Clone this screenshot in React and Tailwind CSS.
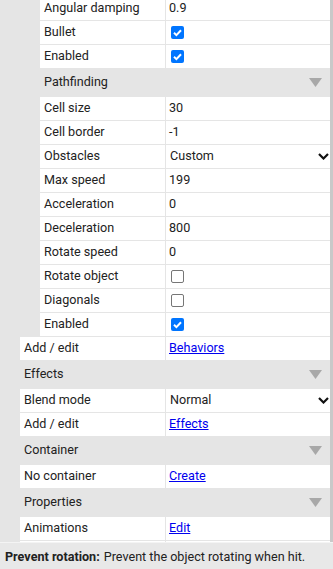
import React from 'react'

const rows = [
  { type: 'row', indent: 40, name: 'Angular damping', value: '0.9' },
  { type: 'row', indent: 40, name: 'Bullet', check: true },
  { type: 'row', indent: 40, name: 'Enabled', check: true },
  { type: 'header', indent: 40, name: 'Pathfinding' },
  { type: 'row', indent: 40, name: 'Cell size', value: '30' },
  { type: 'row', indent: 40, name: 'Cell border', value: '-1' },
  { type: 'row', indent: 40, name: 'Obstacles', select: 'Custom' },
  { type: 'row', indent: 40, name: 'Max speed', value: '199' },
  { type: 'row', indent: 40, name: 'Acceleration', value: '0' },
  { type: 'row', indent: 40, name: 'Deceleration', value: '800' },
  { type: 'row', indent: 40, name: 'Rotate speed', value: '0' },
  { type: 'row', indent: 40, name: 'Rotate object', check: false },
  { type: 'row', indent: 40, name: 'Diagonals', check: false },
  { type: 'row', indent: 40, name: 'Enabled', check: true },
  { type: 'row', indent: 20, name: 'Add / edit', link: 'Behaviors' },
  { type: 'header', indent: 20, name: 'Effects' },
  { type: 'row', indent: 20, name: 'Blend mode', select: 'Normal' },
  { type: 'row', indent: 20, name: 'Add / edit', link: 'Effects' },
  { type: 'header', indent: 20, name: 'Container' },
  { type: 'row', indent: 20, name: 'No container', link: 'Create' },
  { type: 'header', indent: 20, name: 'Properties' },
  { type: 'row', indent: 20, name: 'Animations', link: 'Edit' },
  { type: 'row', indent: 20, name: '', value: '' },
]

function Checkbox({ checked }) {
  if (checked) {
    return (
      <span className="ml-[5px] flex h-[13px] w-[13px] items-center justify-center rounded-[2px] bg-[#0075ff]">
        <svg width="13" height="13" viewBox="0 0 13 13">
          <path d="M3 6.8l2.4 2.3L10 4.2" fill="none" stroke="#fff" strokeWidth="2" />
        </svg>
      </span>
    )
  }
  return <span className="ml-[5px] block h-[13px] w-[13px] rounded-[2px] border border-[#767676] bg-white" />
}

function Value({ row }) {
  if (row.check !== undefined) return <Checkbox checked={row.check} />
  if (row.select) {
    return (
      <div className="flex flex-1 items-center justify-between pl-1 pr-[1px]">
        <span>{row.select}</span>
        <svg width="11" height="7" viewBox="0 0 11 7">
          <path d="M1 1l4.5 4.5L10 1" fill="none" stroke="#111" strokeWidth="2.2" />
        </svg>
      </div>
    )
  }
  if (row.link) return <a href="#" className="pl-[3px] text-[#0000ee] underline">{row.link}</a>
  return <span className="pl-[3px]">{row.value}</span>
}

function Row({ row }) {
  if (row.type === 'header') {
    return (
      <div className="flex h-[27px] shrink-0 items-center justify-between pr-2" style={{ marginLeft: row.indent }}>
        <span className="pl-1">{row.name}</span>
        <svg width="13" height="9" viewBox="0 0 13 9">
          <path d="M0 0h13L6.5 9z" fill="#a8a8a8" />
        </svg>
      </div>
    )
  }
  return (
    <div className="flex h-[23px] shrink-0 gap-px" style={{ marginLeft: row.indent }}>
      <div className="flex flex-1 items-center bg-white pl-1">{row.name}</div>
      <div className="flex w-[164px] items-center bg-white">
        <Value row={row} />
      </div>
    </div>
  )
}

export default function App() {
  return (
    <div className="flex h-[569px] w-[333px] flex-col overflow-hidden bg-[#e5e5e5] text-[12.6px] text-[#222] font-['Roboto',sans-serif]">
      <div className="flex min-h-0 flex-1 overflow-hidden">
        <div className="mt-[-3px] flex flex-1 flex-col gap-px">
          {rows.map((r, i) => <Row key={i} row={r} />)}
        </div>
        <div className="w-[3px] bg-[#c9c9c9]" />
      </div>
      <div className="flex h-[27px] shrink-0 items-center border-t border-[#f4f4f4] bg-[#e8e8e8] pl-[5px] pt-[3px]">
        <span className="font-bold">Prevent rotation:</span>
        <span className="ml-1">Prevent the object rotating when hit.</span>
      </div>
    </div>
  )
}
